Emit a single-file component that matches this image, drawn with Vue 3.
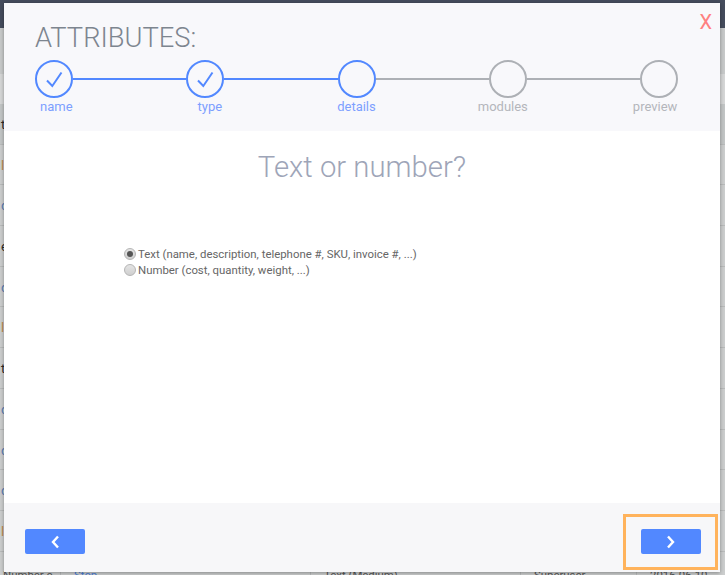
<script setup>
import { ref } from 'vue'

const steps = [
  { label: 'name', state: 'done' },
  { label: 'type', state: 'done' },
  { label: 'details', state: 'current' },
  { label: 'modules', state: 'todo' },
  { label: 'preview', state: 'todo' }
]

const options = [
  { value: 'text', label: 'Text (name, description, telephone #, SKU, invoice #, ...)' },
  { value: 'number', label: 'Number (cost, quantity, weight, ...)' }
]

const kind = ref('text')

// rows of the table behind the modal, only the edges show
const rows = [
  { text: 't', tone: 'dark' },
  { text: 'l', tone: 'orange' },
  { text: 'd', tone: 'blue' },
  { text: 'e', tone: 'dark' },
  { text: 'd', tone: 'blue' },
  { text: 'l', tone: 'orange' },
  { text: 't', tone: 'dark' },
  { text: 'd', tone: 'blue' },
  { text: 'd', tone: 'blue' },
  { text: 'd', tone: 'blue' },
  { text: 'l', tone: 'orange' }
]
</script>

<template>
  <div class="page">
    <div class="topbar"></div>
    <div class="band"></div>
    <div class="table">
      <div v-for="(row, i) in rows" :key="i" class="row" :class="row.tone">{{ row.text }}</div>
      <div class="row last">
        <span class="cell c1">Number e</span>
        <span class="cell c2">Stop</span>
        <span class="cell c3">Text (Medium)</span>
        <span class="cell c4">Superuser</span>
        <span class="cell c5">2016-06-10</span>
      </div>
    </div>

    <div class="modal">
      <header class="head">
        <h1>ATTRIBUTES:</h1>
        <a class="close">X</a>
        <div class="track">
          <template v-for="(step, i) in steps" :key="step.label">
            <div v-if="i > 0" class="line" :class="{ on: step.state !== 'todo' }"></div>
            <div class="dot" :class="{ on: step.state !== 'todo' }">
              <svg v-if="step.state === 'done'" width="21" height="21" viewBox="0 0 21 21">
                <path d="M3 11.5 L8.3 17 L17.5 3.5" fill="none" stroke="#5288ff" stroke-width="2" />
              </svg>
            </div>
          </template>
        </div>
        <div class="labels">
          <span v-for="step in steps" :key="step.label" :class="{ on: step.state !== 'todo' }">{{ step.label }}</span>
        </div>
      </header>

      <main class="body">
        <h2>Text or number?</h2>
        <div class="options">
          <label v-for="opt in options" :key="opt.value" class="option" @click="kind = opt.value">
            <span class="radio" :class="{ checked: kind === opt.value }"></span>
            {{ opt.label }}
          </label>
        </div>
      </main>

      <footer class="foot">
        <button class="nav" type="button">
          <svg width="10" height="14" viewBox="0 0 10 14">
            <path d="M8 1.5 L3 7 L8 12.5" fill="none" stroke="#fff" stroke-width="2.4" />
          </svg>
        </button>
        <div class="highlight">
          <button class="nav" type="button">
            <svg width="10" height="14" viewBox="0 0 10 14">
              <path d="M2 1.5 L7 7 L2 12.5" fill="none" stroke="#fff" stroke-width="2.4" />
            </svg>
          </button>
        </div>
      </footer>
    </div>
  </div>
</template>

<style>
html, body {
  margin: 0;
  overflow: hidden;
}
</style>

<style scoped>
.page {
  position: relative;
  width: 725px;
  height: 575px;
  overflow: hidden;
  background: #c9cbcb;
  font-family: Roboto, "Liberation Sans", sans-serif;
}

.topbar {
  height: 28px;
  background: #454c5d;
}

.band {
  height: 46px;
  background: #c8caca;
}

.table {
  border-top: 30px solid #d6d7d7;
  background: #cbcdcd;
}

.row {
  height: 39.7px;
  border-bottom: 1px solid #b9bbbb;
  font-size: 13px;
  line-height: 41px;
  padding-left: 1px;
  background: #cccece;
  white-space: nowrap;
}

.row:first-child {
  background: #c3c6c6;
}

.dark { color: #2d2a2a; }
.orange { color: #c08a4c; }
.blue { color: #5a7db5; }

.last {
  position: relative;
  padding-left: 0;
  font-size: 11.4px;
  color: #555;
}

.cell {
  position: absolute;
  top: 0;
  height: 60px;
  padding: 15px 0 0 13px;
  line-height: 16px;
  box-sizing: border-box;
  border-left: 1px solid #b9bbbb;
}

.c1 { left: -10px; border-left: none; }
.c2 { left: 60px; color: #4a7fd8; }
.c3 { left: 310px; }
.c4 { left: 520px; }
.c5 { left: 636px; }

.modal {
  position: absolute;
  left: 4px;
  top: 3px;
  width: 716px;
  height: 569px;
  display: flex;
  flex-direction: column;
  background: #fff;
  box-shadow: 0 1px 4px rgba(0, 0, 0, 0.35);
}

.head {
  position: relative;
  height: 128px;
  box-sizing: border-box;
  padding: 19px 0 0 31px;
  background: #f8f8fb;
}

h1 {
  margin: 0;
  font-size: 27.3px;
  font-weight: 300;
  line-height: 33px;
  color: #7d858f;
}

.close {
  position: absolute;
  top: 7px;
  right: 8px;
  font-size: 20px;
  line-height: 24px;
  color: #ff8080;
}

.track {
  display: flex;
  align-items: center;
  margin-top: 5px;
}

.dot {
  width: 38px;
  height: 38px;
  box-sizing: border-box;
  flex: none;
  display: flex;
  align-items: center;
  justify-content: center;
  border: 2px solid #adb0b5;
  border-radius: 50%;
}

.dot.on {
  border-color: #5288ff;
}

.line {
  width: 113.25px;
  height: 2px;
  background: #adb0b5;
}

.line.on {
  background: #5288ff;
}

.labels {
  display: flex;
  margin: 0 0 0 5px;
  font-size: 13px;
  line-height: 17px;
  color: #b4b6bb;
}

.labels .on {
  color: #7d9fff;
}

.labels span:nth-child(2) { margin-left: 125px; }
.labels span:nth-child(3) { margin-left: 115px; }
.labels span:nth-child(4) { margin-left: 102px; }
.labels span:nth-child(5) { margin-left: 105px; }

.body {
  flex: 1;
}

h2 {
  margin: 18px 0 0;
  text-align: center;
  font-size: 29.3px;
  font-weight: 300;
  line-height: 36px;
  color: #9ea5b8;
}

.options {
  margin: 61px 0 0 120px;
}

.option {
  display: flex;
  align-items: center;
  gap: 2px;
  height: 16px;
  font-size: 11.4px;
  color: #666;
}

.radio {
  width: 12px;
  height: 12px;
  box-sizing: border-box;
  border: 1px solid #b5b5b5;
  border-radius: 50%;
  background: linear-gradient(#e4e4e4, #cfcfcf);
  display: flex;
  align-items: center;
  justify-content: center;
}

.radio.checked::after {
  content: "";
  width: 6px;
  height: 6px;
  border-radius: 50%;
  background: #555;
}

.foot {
  height: 69px;
  box-sizing: border-box;
  padding: 8px 2px 0 21px;
  display: flex;
  align-items: center;
  justify-content: space-between;
  background: #f7f7f9;
}

.nav {
  width: 60px;
  height: 25px;
  padding: 0;
  border: none;
  border-radius: 2px;
  background: #5288ff;
  display: flex;
  align-items: center;
  justify-content: center;
}

.highlight {
  width: 95px;
  height: 56px;
  box-sizing: border-box;
  border: 3px solid #ffb35c;
  display: flex;
  align-items: center;
  padding-left: 15px;
}
</style>
